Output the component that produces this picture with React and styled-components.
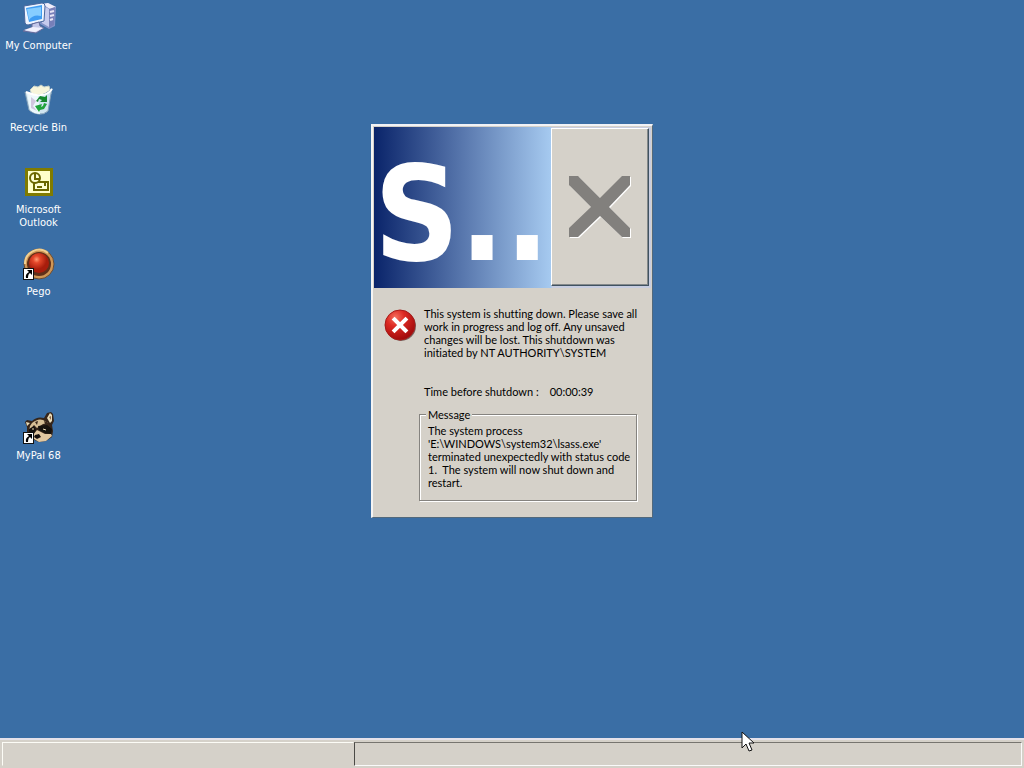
import React from 'react';
import styled, { createGlobalStyle } from 'styled-components';

const FACE = '#d5d1c9';

const GlobalStyle = createGlobalStyle`
  * { box-sizing: border-box; }
  body {
    margin: 0;
    background: #3a6ea5;
    font-family: Lato, 'Liberation Sans', Arial, sans-serif;
    font-variant-ligatures: none;
    font-size: 11px;
    line-height: 13px;
    color: #000;
  }
  svg { flex: none; }
`;

const Screen = styled.div`
  position: relative;
  display: flex;
  flex-direction: column;
  min-height: 100vh;
  overflow: hidden;
`;

const Desktop = styled.main`
  position: relative;
  flex: 1;
`;

const IconGrid = styled.nav`
  display: grid;
  grid-template-columns: 77px;
  grid-auto-rows: 82px;
`;

const Shortcut = styled.button`
  grid-row: ${(p) => p.$row};
  display: flex;
  flex-direction: column;
  align-items: center;
  gap: 5px;
  padding: 2px 0 0;
  border: 0;
  background: none;
  color: #fff;
  font-family: 'DejaVu Sans Condensed', 'Noto Sans', sans-serif;
  font-size: 11px;
  line-height: 13px;
`;

const ShortcutLabel = styled.span`
  white-space: pre-line;
  text-align: center;
`;

const Dialog = styled.section`
  position: absolute;
  top: 124px;
  left: calc(50% - 141px);
  width: 282px;
  padding: 1px 1px 16px;
  background: ${FACE};
  border: 2px solid;
  border-color: #f1f2f6 #52697c #52697c #f4f4f4;
  border-right-width: 1px;
  border-bottom-width: 1px;
`;

const TitleBar = styled.header`
  display: flex;
  justify-content: space-between;
  height: 161px;
  padding: 1px 2px 2px 0;
  background: linear-gradient(to right, #0a246a 0, #a6caf0 177px, #c7cde0 178px);
`;

const Title = styled.h1`
  margin: 0;
  width: 176px;
  color: #fff;
  font-family: 'DejaVu Sans Condensed', sans-serif;
  font-size: 132px;
  font-weight: bold;
  line-height: 172px;
  white-space: nowrap;
`;

const CloseButton = styled.button`
  display: flex;
  align-items: center;
  justify-content: center;
  width: 98px;
  height: 158px;
  padding: 0;
  background: ${FACE};
  border: 1px solid;
  border-color: #fff #405362 #405362 #fff;
  box-shadow: inset -1px -1px 0 #85898b;
`;

const Notice = styled.div`
  display: flex;
  gap: 7px;
  padding: 19px 0 0 10px;
`;

const Paragraph = styled.p`
  margin: 0;
  white-space: pre;
`;

const Countdown = styled.div`
  display: flex;
  gap: 11px;
  padding: 26px 0 0 50px;
`;

const MessageBox = styled.fieldset`
  margin: 10px 14px 0 45px;
  height: 93px;
  padding: 3px 8px 0;
  border: 1px solid #85837f;
  box-shadow: 1px 1px 0 #fff, inset 1px 1px 0 #fff;
  min-width: 0;
`;

const MessageTitle = styled.legend`
  padding: 0 2px;
  margin-left: -2px;
  background: ${FACE};
`;

const Taskbar = styled.footer`
  display: flex;
  height: 30px;
  padding: 2px 2px 2px;
  background: ${FACE};
  border-top: 2px solid #e4e1ea;
`;

const BarPanel = styled.div`
  border: 1px solid;
  ${(p) =>
    p.$sunken
      ? 'flex: 1; border-color: #77756f #fafafa #fafafa #4b4a46;'
      : 'flex: 0 0 352px; border-color: #fcfcf6 transparent transparent #fcfcf6;'}
`;

const Pointer = styled.svg`
  position: absolute;
  left: 741px;
  top: 731px;
`;

const ShortcutArrow = () => (
  <g>
    <rect x="0.5" y="20.5" width="10" height="11" fill="#fff" stroke="#111" />
    <path d="M4 22h5v5l-2-2q-2 1-2 5H3q-1-4 3-6z" fill="#000" />
  </g>
);

const ComputerIcon = () => (
  <svg width="34" height="32" viewBox="0 0 34 32" aria-hidden="true">
    <path d="M20 2l6-1 8 4-1 19-6 3-9-5z" fill="#8292c8" />
    <path d="M20 2l6-1 8 4-6 2z" fill="#efedfa" />
    <path d="M27 7l6-2-1 18-5 3z" fill="#777fb8" />
    <path d="M20 3l7 4v18l-7-4z" fill="#c5caed" />
    <path d="M28 10l4-1M28 14l4-1M28 18l3-1" stroke="#e6e4f5" strokeWidth="2" />
    <path d="M2 4l18-3q3 0 3 3l-1 15-16 4q-2 0-3-2z" fill="#eef5ff" stroke="#49669d" />
    <path d="M4 6l16-3v14L7 20z" fill="#3f9cf2" />
    <path d="M5 7l14-2v9Q11 12 7 18z" fill="#86cdff" />
    <path d="M10 22l7-2 1 4 4 2-8 5-13-2 9-4z" fill="#c4c8e9" stroke="#666c9b" />
    <path d="M2 28l9-3 10 1-8 4z" fill="#f0f0fc" />
  </svg>
);

const BinIcon = () => (
  <svg width="32" height="32" viewBox="0 0 32 32" aria-hidden="true">
    <path d="M7 6l4-4 4 1 3-2 3 2 5-1 2 8-18 2z" fill="#f7f5db" stroke="#c7d2c9" />
    <path d="M2 8q10 3 14 3 7 0 13-7l-4 23q-4 4-10 3-6-1-9-4z" fill="#cfe4f0" stroke="#819eb6" />
    <path d="M4 9l11 3 2 18q-6 0-10-4z" fill="#edf8fc" />
    <path d="M3 8q10 4 15 3 7 0 11-6" fill="none" stroke="#fff" strokeWidth="2" />
    <path d="M8 13l5 4-3 5 4 5-6-3z" fill="#d2c7df" />
    <path d="M13 17l4-5 5 1 2-2v7h-7l2-2-3-1-1 3z" fill="#16882d" />
    <path d="M24 20l-3 5-4 1-1 2-4-6 7-2-1 3 2-1 1-3z" fill="#20a23a" />
  </svg>
);

const OutlookIcon = () => (
  <svg width="28" height="32" viewBox="0 0 28 32" aria-hidden="true">
    <rect x="0" y="2" width="28" height="28" fill="#807b00" />
    <rect x="3" y="5" width="22" height="22" fill="#ffffc9" />
    <rect x="9" y="16" width="14" height="8" fill="#ffffd5" stroke="#6b6700" strokeWidth="2" />
    <circle cx="10" cy="12" r="5" fill="#ffffd5" stroke="#6b6700" strokeWidth="2" />
    <path d="M10 8v5h4M12 21h5" fill="none" stroke="#6b6700" strokeWidth="2" />
    <path d="M19 17h2v3h-2z" fill="#6b6700" />
  </svg>
);

const PegoIcon = () => (
  <svg width="32" height="32" viewBox="0 0 32 32" aria-hidden="true">
    <defs>
      <radialGradient id="ruby" cx="38%" cy="32%">
        <stop offset="0" stopColor="#ff9b73" />
        <stop offset="0.35" stopColor="#e5482b" />
        <stop offset="1" stopColor="#a81d0c" />
      </radialGradient>
    </defs>
    <circle cx="16" cy="16" r="15" fill="#cf9655" stroke="#6b4c32" />
    <path d="M2 16A14 14 0 0 1 25 5" fill="none" stroke="#f0cf91" strokeWidth="2" />
    <circle cx="16" cy="16" r="12" fill="#602f19" />
    <circle cx="16" cy="15" r="10" fill="url(#ruby)" />
    <ShortcutArrow />
  </svg>
);

const RaccoonIcon = () => (
  <svg width="32" height="32" viewBox="0 0 32 32" aria-hidden="true">
    <path d="M4 15l-2-5 2-2 5 1q5-5 12-3l3-5 4-1 2 2 1 7-2 4 1 6-1 6-6 4-7 1-7-3-5-6z" fill="#35251a" />
    <path d="M4 14l-1-4 4 1zM24 6l3-5 2 2v6l-2 2z" fill="#eadcb8" />
    <path d="M26 5l2-1v4z" fill="#8d684e" />
    <path d="M9 11q6-5 11-3l5 3-5 1-6 4-3-3-5 6 1-5z" fill="#d8c096" />
    <path d="M12 10l3-1-1 4zM21 9l3 1 3 4-5-2z" fill="#3b281b" />
    <path d="M6 17l5-3 2 4-3 5-4-2zM15 14l9-1 5 4-1 5-6-1-6-3z" fill="#17120d" />
    <path d="M10 23l4-5 8 4 6 0 1 2-6 5-7 1-5-3z" fill="#e2c7a0" />
    <path d="M12 23l4-1 2 3-4 2-3-2z" fill="#160f0c" />
    <path d="M9 17l2 0M20 17l3 1" stroke="#f0dfb9" strokeWidth="1" />
    <ShortcutArrow />
  </svg>
);

const ErrorIcon = () => (
  <svg width="33" height="34" viewBox="0 -1 33 34" aria-hidden="true">
    <defs>
      <radialGradient id="alarm" cx="35%" cy="25%" r="75%">
        <stop offset="0" stopColor="#f4705e" />
        <stop offset="0.4" stopColor="#dd2a23" />
        <stop offset="1" stopColor="#a20c0d" />
      </radialGradient>
    </defs>
    <circle cx="17" cy="18" r="15" fill="#79625e" />
    <circle cx="16" cy="17" r="15" fill="url(#alarm)" stroke="#a71a18" />
    <path d="M10.500 11.500l11 11M21.500 11.500l-11 11" stroke="#fff" strokeWidth="4" strokeLinecap="square" />
  </svg>
);

const CloseGlyph = () => (
  <svg width="64" height="64" viewBox="0 0 64 64" aria-hidden="true">
    <path
      transform="translate(1 1)"
      d="M1 1h9l22 22L54 1h8v9L41 32l21 21v9h-8L32 41 10 62H1v-9l22-21L1 10z"
      fill="#fff"
    />
    <path d="M1 1h9l22 22L54 1h8v9L41 32l21 21v9h-8L32 41 10 62H1v-9l22-21L1 10z" fill="#82807d" />
  </svg>
);

const shortcuts = [
  { label: 'My Computer', Icon: ComputerIcon, row: 1 },
  { label: 'Recycle Bin', Icon: BinIcon, row: 2 },
  { label: 'Microsoft\nOutlook', Icon: OutlookIcon, row: 3 },
  { label: 'Pego', Icon: PegoIcon, row: 4 },
  { label: 'MyPal 68', Icon: RaccoonIcon, row: 6 },
];

const notice = `This system is shutting down. Please save all
work in progress and log off. Any unsaved
changes will be lost. This shutdown was
initiated by NT AUTHORITY\\SYSTEM`;

const message = `The system process
'E:\\WINDOWS\\system32\\lsass.exe'
terminated unexpectedly with status code
1.  The system will now shut down and
restart.`;

export default function App() {
  return (
    <Screen>
      <GlobalStyle />
      <Desktop>
        <IconGrid aria-label="Desktop">
          {shortcuts.map(({ label, Icon, row }) => (
            <Shortcut key={label} $row={row} type="button">
              <Icon />
              <ShortcutLabel>{label}</ShortcutLabel>
            </Shortcut>
          ))}
        </IconGrid>
        <Dialog role="dialog" aria-label="System Shutdown">
          <TitleBar>
            <Title>S..</Title>
            <CloseButton type="button" disabled aria-label="Close">
              <CloseGlyph />
            </CloseButton>
          </TitleBar>
          <Notice>
            <ErrorIcon />
            <Paragraph>{notice}</Paragraph>
          </Notice>
          <Countdown>
            <span>Time before shutdown :</span>
            <time>00:00:39</time>
          </Countdown>
          <MessageBox>
            <MessageTitle>Message</MessageTitle>
            <Paragraph>{message}</Paragraph>
          </MessageBox>
        </Dialog>
      </Desktop>
      <Taskbar>
        <BarPanel />
        <BarPanel $sunken />
      </Taskbar>
      <Pointer width="14" height="22" viewBox="0 0 14 22" aria-hidden="true">
        <path d="M1 1v16l4-4 3 7 3-1-3-7h5z" fill="#fff" stroke="#111" />
      </Pointer>
    </Screen>
  );
}
